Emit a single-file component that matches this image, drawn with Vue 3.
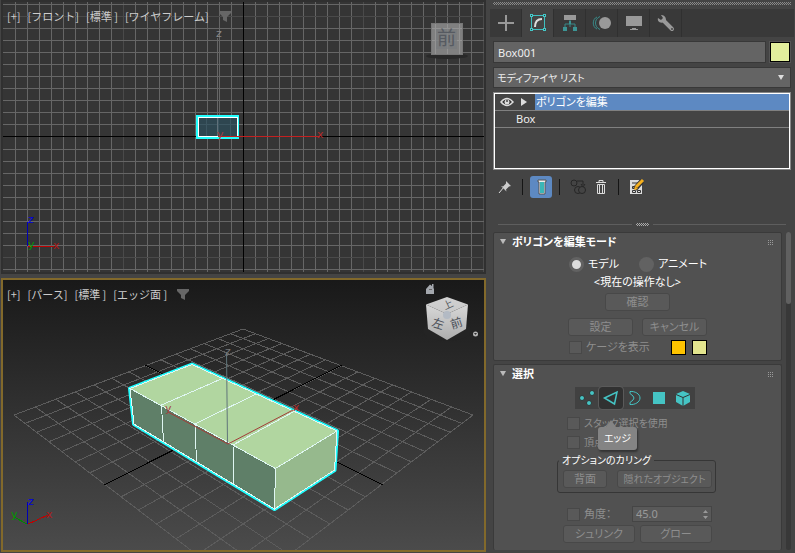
<template>
  <div class="app">
    <main class="viewports">
      <section class="viewport front">
        <svg class="scene" viewBox="3 2 481 270" preserveAspectRatio="xMidYMid slice">
          <g shape-rendering="crispEdges">
            <rect
              v-for="line in frontColumns"
              :key="'c' + line.pos"
              :x="line.pos"
              y="2"
              width="1"
              height="270"
              :fill="line.color"
            />
            <rect
              v-for="line in frontRows"
              :key="'r' + line.pos"
              x="3"
              :y="line.pos"
              width="481"
              height="1"
              :fill="line.color"
            />
            <rect x="3" y="136" width="481" height="1" fill="#000" />
            <rect x="243" y="2" width="1" height="270" fill="#000" />
            <rect x="217" y="38" width="1" height="98" fill="#666" />
            <rect x="196" y="115" width="43" height="24" fill="#2ff" />
            <rect x="198" y="117" width="40" height="20" fill="#fff" />
            <rect x="199" y="118" width="38" height="18" fill="#2e4650" />
            <path d="M206.500 118v18M218.500 118v18M230.500 118v18M199 124.500h38" stroke="#3c5661" />
            <rect x="217" y="118" width="1" height="18" fill="#60717a" />
            <rect x="218" y="136" width="102" height="1" fill="#c42020" />
            <rect x="27" y="222" width="1" height="24" fill="#0000b4" />
            <rect x="28" y="246" width="26" height="1" fill="#c00000" />
          </g>
          <text class="axis" x="216" y="37" fill="#888">z</text>
          <text class="axis" x="217" y="138" fill="#a33a40">y</text>
          <text class="axis" x="317" y="138" fill="#b52a2a">x</text>
          <text class="axis" x="28" y="223" fill="#0000e0">z</text>
          <text class="axis" x="28" y="248" fill="#090">y</text>
          <text class="axis" x="53" y="249" fill="#b01818">x</text>
          <ellipse cx="447" cy="56" rx="21" ry="3" fill="#292929" />
          <rect x="431.500" y="23.500" width="31" height="31" fill="#808080" stroke="#777" />
          <path d="M435.500 24v30M447.500 24v30M459.500 24v30M432 28.500h30M432 40.500h30" stroke="#939393" />
          <rect x="436" y="29" width="21" height="20" fill="#777a7d" opacity=".7" />
          <text class="cube-text" x="437" y="45" font-size="19" fill="#565a61">前</text>
        </svg>
        <nav class="labels">
          <button v-for="label in frontLabels" :key="label" type="button">{{ label }}</button>
          <svg class="funnel" viewBox="0 0 12 11"><path d="M0 0h12v2L8 6v5L4 9V6L0 2z" /></svg>
        </nav>
      </section>

      <section class="viewport persp">
        <svg class="scene" viewBox="3 280 481 270" preserveAspectRatio="xMidYMid slice">
          <defs>
            <linearGradient id="cubeTop" x1="0" y1="0" x2="0" y2="1">
              <stop offset="0" stop-color="#d2d2d2" />
              <stop offset="1" stop-color="#c8c8c8" />
            </linearGradient>
            <linearGradient id="cubeSide" x1="0" y1="0" x2="0" y2="1">
              <stop offset="0" stop-color="#d8d8d8" />
              <stop offset="1" stop-color="#adadad" />
            </linearGradient>
          </defs>
          <path :d="floorGrid" stroke="#5c5c5c" fill="none" shape-rendering="crispEdges" />
          <path d="M145 365L383 485M104 485L342 365" stroke="#000" shape-rendering="crispEdges" />
          <path
            d="M130 388.500L192 364.500L337 431L334.500 470L274.500 509L134 424Z"
            fill="#2ff"
            stroke="#2ff"
            stroke-width="4"
            stroke-linejoin="round"
          />
          <path d="M130 388.500L192 364.500L337 431L275.500 468.500Z" fill="#b1d6a0" />
          <path d="M130 388.500L275.500 468.500L274.500 509L134 424Z" fill="#5f7f68" />
          <path d="M275.500 468.500L337 431L334.500 470L274.500 509Z" fill="#96b98d" />
          <path
            d="M130 388.500L192 364.500L337 431L334.500 470L274.500 509L134 424ZL275.500 468.500L337 431M275.500 468.500L274.500 509M161.500 405L163.500 442M195 424L196.500 462M233 445L233.500 484M161.500 405L223.500 378M195 424L256 394M233 445L294 411.500"
            fill="none"
            stroke="#dff6f2"
            shape-rendering="crispEdges"
          />
          <path d="M226.500 352L227.500 444" stroke="#60757a" />
          <path d="M168 412L228 444L293 410" fill="none" stroke="#a33c38" />
          <text class="axis" x="225" y="355" fill="#777">z</text>
          <text class="axis" x="165" y="412" fill="#a14343">y</text>
          <text class="axis" x="293" y="411" fill="#b52a2a">x</text>
          <g fill="none" shape-rendering="crispEdges">
            <path d="M27.500 502v22" stroke="#0000b4" />
            <path d="M28 524L48 515" stroke="#c00000" />
            <path d="M27 524L14 517" stroke="#080" />
          </g>
          <text class="axis" x="28" y="505" fill="#0000e0">z</text>
          <text class="axis" x="11" y="518" fill="#090">y</text>
          <text class="axis" x="46" y="518" fill="#b01818">x</text>

          <ellipse cx="447" cy="331" rx="24" ry="10" fill="#242424" />
          <path d="M447 297L468 304.500L447 314L426 304.500Z" fill="url(#cubeTop)" />
          <path d="M426 304.500L447 314V340L428 329Z" fill="url(#cubeSide)" />
          <path d="M468 304.500L447 314V340L466 329Z" fill="url(#cubeSide)" />
          <text class="cube-text" font-size="10" fill="#555a60" transform="translate(445 310) rotate(-25)">上</text>
          <circle cx="447" cy="315" r="4" fill="#b3bac4" />
          <text class="cube-text" font-size="12" fill="#4b5058" transform="translate(431 326) rotate(18)">左</text>
          <text class="cube-text" font-size="12" fill="#4b5058" transform="translate(452 329) rotate(-18)">前</text>
          <path d="M426 289L430 284.500L432 286V284H433.500V288L434 289V294H426Z" fill="#a4a8ae" />
          <path d="M429 289h3v1h-3z" fill="#666" />
          <circle cx="475.500" cy="334" r="2.500" fill="#b5b5b5" />
          <path d="M474 333h3l-1.500 2z" fill="#333" />
        </svg>
        <nav class="labels">
          <button v-for="label in perspLabels" :key="label" type="button">{{ label }}</button>
          <svg class="funnel" viewBox="0 0 12 11"><path d="M0 0h12v2L8 6v5L4 9V6L0 2z" /></svg>
        </nav>
      </section>
    </main>

    <aside class="panel">
      <div class="grip"></div>
      <nav class="tabs">
        <button type="button" class="tab" aria-label="作成">
          <svg viewBox="0 0 24 24"><path d="M12 4v16M4 12h16" stroke="#999" stroke-width="2" /></svg>
        </button>
        <button type="button" class="tab active" aria-label="修正">
          <svg viewBox="0 0 24 24" shape-rendering="crispEdges">
            <path d="M6 4.500h12M6 18.500h12M5.500 6v12M18.500 6v12" stroke="#3fbfc0" fill="none" />
            <path d="M4.500 3.500h2v2h-2zM17.500 3.500h2v2h-2zM4.500 17.500h2v2h-2zM17.500 17.500h2v2h-2z" fill="#333" stroke="#45c8c8" />
            <path d="M9 16C9 11 11 8 16 8" stroke="#ddd" stroke-width="2" fill="none" shape-rendering="auto" />
          </svg>
        </button>
        <button type="button" class="tab" aria-label="階層">
          <svg viewBox="0 0 24 24">
            <path d="M6 4h12v5H6z" fill="#999" />
            <path d="M12 9v4M7 17v-4h10v4M12 13v3" stroke="#388a89" fill="none" />
            <path d="M5 16h4v4H5zM15 16h4v4h-4zM11 10h2v3h-2z" fill="#3c9595" />
          </svg>
        </button>
        <button type="button" class="tab" aria-label="モーション">
          <svg viewBox="0 0 24 24">
            <circle cx="15" cy="12" r="6" fill="#999" />
            <path d="M7 6C2 8 2 16 7 18M10 5.500C4 8 4 16 10 18.500" stroke="#388a89" fill="none" />
          </svg>
        </button>
        <button type="button" class="tab" aria-label="表示">
          <svg viewBox="0 0 24 24"><path d="M4 5h16v10H4zM10 17h4v1h2v1H8v-1h2z" fill="#999" /></svg>
        </button>
        <button type="button" class="tab" aria-label="ユーティリティ">
          <svg viewBox="0 0 24 24">
            <path d="M10 10L18 18" stroke="#999" stroke-width="4" stroke-linecap="round" />
            <path d="M7 4L9 7L7 9L4 7C3 10 6 13 10 11L12 9C12 5 9 4 7 4Z" fill="#999" />
            <circle cx="18" cy="18" r="1" fill="#444" />
          </svg>
        </button>
      </nav>

      <div class="name-row">
        <input v-model="objectName" class="name-input" type="text" aria-label="オブジェクト名" />
        <button type="button" class="color-swatch" aria-label="カラー"></button>
      </div>

      <div class="modifier-select">
        <select aria-label="モディファイヤ リスト">
          <option>モディファイヤ リスト</option>
        </select>
      </div>

      <ul class="stack">
        <li class="stack-row">
          <svg class="eye" viewBox="0 0 14 10">
            <path d="M1 5Q7-2 13 5Q7 12 1 5Z" fill="#333" stroke="#ddd" stroke-width="1.500" />
            <circle cx="7" cy="5" r="2.500" fill="#ddd" />
            <circle cx="7" cy="4" r="1" fill="#444" />
          </svg>
          <svg class="expand" viewBox="0 0 6 8"><path d="M0 0l6 4-6 4z" fill="#ddd" /></svg>
          <button type="button" class="stack-name selected">ポリゴンを編集</button>
        </li>
        <li class="stack-row">
          <button type="button" class="stack-name base">Box</button>
        </li>
      </ul>

      <div class="toolbar">
        <button type="button" class="tool" aria-label="スタックを固定">
          <svg viewBox="0 0 22 22">
            <path d="M6 17l5-6" stroke="#ddd" />
            <path d="M13 5l5 5-2 .500-3 3 .500 2L8 10l2 .500 3-3z" fill="#ccc" />
          </svg>
        </button>
        <span class="divider"></span>
        <button type="button" class="tool on" aria-label="最終結果を表示">
          <svg viewBox="0 0 22 22">
            <path d="M8 4h8v2h-1v12h-6V6H8z" fill="#eee" stroke="#555" />
            <path d="M10 6h4v11h-4z" fill="#3bb6b6" />
          </svg>
        </button>
        <span class="divider"></span>
        <button type="button" class="tool" aria-label="固有にする">
          <svg viewBox="0 0 22 22">
            <g fill="#444" stroke="#262626">
              <circle cx="7" cy="7" r="3" />
              <path d="M10 5h6v4M14 8l2 3 2-3" />
              <circle cx="11" cy="14" r="3.500" />
              <circle cx="15" cy="14" r="3.500" />
            </g>
          </svg>
        </button>
        <button type="button" class="tool" aria-label="削除">
          <svg viewBox="0 0 22 22">
            <path d="M7 6.500h10M10 6V4.500h4V6M8.500 8.500h7v9h-7zM10.500 9v8M13.500 9v8" stroke="#ddd" fill="none" />
          </svg>
        </button>
        <span class="divider"></span>
        <button type="button" class="tool" aria-label="セットを設定">
          <svg viewBox="0 0 22 22">
            <path d="M4 4h12v14H4z" fill="#ddd" />
            <path d="M6 7h8M6.500 10.500h3v2h-3zM6.500 14.500h3v2h-3zM11.500 14.500h3v2h-3z" stroke="#333" fill="none" />
            <path d="M9 13l7-8" stroke="#333" stroke-width="5" />
            <path d="M10 11l7-7" stroke="#f6b01e" stroke-width="3" />
            <path d="M8 14l1-4 3 3z" fill="#f6b01e" />
          </svg>
        </button>
      </div>

      <div class="splitter"><span></span></div>

      <div class="rollout-area">
        <div class="rollouts">
          <section class="rollout">
            <header class="rollout-head">
              <svg class="arrow" viewBox="0 0 7 6"><path d="M0 0h7L3.500 6z" /></svg>
              <h2>ポリゴンを編集モード</h2>
              <svg class="dots" viewBox="0 0 5 5"><path d="M0 .500h5M0 2.500h5M0 4.500h5" /></svg>
            </header>
            <div class="radios">
              <label><input v-model="mode" type="radio" value="model" />モデル</label>
              <label><input v-model="mode" type="radio" value="animate" />アニメート</label>
            </div>
            <p class="operation">&lt;現在の操作なし&gt;</p>
            <button type="button" class="btn confirm" disabled>確認</button>
            <div class="pair">
              <button type="button" class="btn" disabled>設定</button>
              <button type="button" class="btn" disabled>キャンセル</button>
            </div>
            <div class="cage">
              <label class="check"><input type="checkbox" disabled />ケージを表示</label>
              <button type="button" class="cage-color orange" aria-label="ケージ カラー"></button>
              <button type="button" class="cage-color yellow" aria-label="選択ケージ カラー"></button>
            </div>
          </section>

          <section class="rollout selection">
            <header class="rollout-head">
              <svg class="arrow" viewBox="0 0 7 6"><path d="M0 0h7L3.500 6z" /></svg>
              <h2>選択</h2>
              <svg class="dots" viewBox="0 0 5 5"><path d="M0 .500h5M0 2.500h5M0 4.500h5" /></svg>
            </header>
            <div class="levels">
              <button type="button" aria-label="頂点">
                <svg viewBox="0 0 24 22" fill="#45c4c4" stroke="#333">
                  <circle cx="7" cy="11" r="2.500" />
                  <circle cx="17" cy="6" r="2.500" />
                  <circle cx="14" cy="16" r="2.500" />
                </svg>
              </button>
              <button type="button" class="active" aria-label="エッジ">
                <svg viewBox="0 0 24 22"><path d="M5.500 11L18 5L15.500 17z" fill="none" stroke="#45c4c4" stroke-width="1.500" /></svg>
                <span class="tooltip">エッジ</span>
              </button>
              <button type="button" aria-label="境界">
                <svg viewBox="0 0 24 22">
                  <path d="M7 4.500C12 4 17 7 17 11S12 18 7 17.500V15.500L10 13L11 11L10 9L7 6.500Z" fill="none" stroke="#45c4c4" />
                </svg>
              </button>
              <button type="button" aria-label="ポリゴン">
                <svg viewBox="0 0 24 22"><path d="M6 5h12v12H6z" fill="#45c4c4" /></svg>
              </button>
              <button type="button" aria-label="要素">
                <svg viewBox="0 0 24 22">
                  <path d="M12 4l7 3v8l-7 4-7-4V7z" fill="#45c4c4" />
                  <path d="M5 7.500l7 3 7-3M12 10.500V19" fill="none" stroke="#333" />
                </svg>
              </button>
            </div>
            <label class="check option"><input type="checkbox" disabled />スタック選択を使用</label>
            <label class="check option"><input type="checkbox" disabled />頂点</label>
            <fieldset class="culling">
              <legend>オプションのカリング</legend>
              <button type="button" class="btn" disabled>背面</button>
              <button type="button" class="btn" disabled>隠れたオブジェクト</button>
            </fieldset>
            <div class="angle">
              <label class="check"><input type="checkbox" disabled />角度：</label>
              <div class="spinner">
                <input v-model="angle" type="text" aria-label="角度の値" disabled />
                <svg viewBox="0 0 5 9"><path d="M0 3h5L2.500 0zM0 6h5L2.500 9z" fill="#999" /></svg>
              </div>
            </div>
            <div class="pair shrink">
              <button type="button" class="btn" disabled>シュリンク</button>
              <button type="button" class="btn" disabled>グロー</button>
            </div>
          </section>
        </div>
        <div class="scrollbar"><span></span></div>
      </div>
    </aside>
  </div>
</template>

<script setup>
import { ref, computed } from 'vue'

const objectName = ref('Box001')
const mode = ref('model')
const angle = ref('45.0')

const frontLabels = ['[+]', '[フロント]', '[標準 ]', '[ワイヤフレーム]']
const perspLabels = ['[+]', '[パース]', '[標準 ]', '[エッジ面 ]']

const lineColor = (step) => (step % 10 === 0 ? '#4a4a4a' : '#666')

const frontColumns = computed(() => {
  const lines = []
  for (let i = -19; i <= 20; i++) {
    if (i !== 0) lines.push({ pos: 243 + i * 12, color: lineColor(i) })
  }
  return lines
})

const frontRows = computed(() => {
  const lines = []
  for (let i = -11; i <= 11; i++) {
    if (i === 0) continue
    lines.push({ pos: 136 + i * 12 + (i > 0 ? 1 : 0), color: lineColor(i) })
  }
  return lines
})

// Floor corners in screen space, w is the perspective weight
const corners = {
  back: { x: 243, y: 329, w: 1.341 },
  right: { x: 473, y: 415, w: 1 },
  near: { x: 243, y: 590, w: 0.659 },
  left: { x: 14, y: 415, w: 1 }
}

const project = (u, v) => {
  const parts = [
    [corners.back, (1 - u) * (1 - v)],
    [corners.right, u * (1 - v)],
    [corners.near, u * v],
    [corners.left, (1 - u) * v]
  ]
  let x = 0
  let y = 0
  let w = 0
  parts.forEach(([c, k]) => {
    x += c.x * c.w * k
    y += c.y * c.w * k
    w += c.w * k
  })
  return `${(x / w).toFixed(1)} ${(y / w).toFixed(1)}`
}

const floorGrid = computed(() => {
  let d = ''
  for (let i = 0; i <= 14; i++) {
    const t = i / 14
    d += `M${project(t, 0)}L${project(t, 1)}M${project(0, t)}L${project(1, t)}`
  }
  return d
})
</script>

<style>
body {
  margin: 0;
  background: #444;
}
</style>

<style scoped>
.app {
  display: grid;
  grid-template-columns: minmax(0, 1fr) 309px;
  min-height: 100vh;
  background: #444;
  color: #eee;
  font-family: "Noto Sans", "Noto Sans CJK JP", sans-serif;
  font-size: 11px;
  line-height: 16px;
}

.app * {
  box-sizing: border-box;
}

button,
input,
select {
  font: inherit;
  color: inherit;
  margin: 0;
  padding: 0;
  border: none;
  background: none;
}

.viewports {
  display: grid;
  grid-template-rows: 1fr 1fr;
  gap: 4px;
  padding: 0 0 1px 1px;
}

.viewport {
  position: relative;
  min-height: 0;
  border: 2px solid #333;
}

.front {
  background: #353535;
  border-color: #303030;
}

.persp {
  background: linear-gradient(#191919, #4b4b4b);
  border-color: #82692b;
}

.scene {
  display: block;
  width: 100%;
  height: 100%;
}

.axis {
  font-family: "DejaVu Sans", sans-serif;
  font-size: 11px;
}

.cube-text {
  font-family: "Noto Sans CJK JP", sans-serif;
}

.labels {
  position: absolute;
  top: 6px;
  left: 4px;
  display: flex;
  align-items: center;
  gap: 7px;
  color: #ccc;
  font-family: "Noto Sans CJK JP", sans-serif;
}

.labels button {
  white-space: pre;
}

.funnel {
  width: 12px;
  margin-left: 3px;
  fill: #666;
}

.panel {
  display: flex;
  flex-direction: column;
  padding: 2px 4px 3px 7px;
  font-feature-settings: "palt";
}

.grip {
  height: 3px;
  background: repeating-conic-gradient(#888 0 25%, #444 0 50%) 0 0 / 2px 2px;
}

.tabs {
  display: flex;
  height: 28px;
  margin: 4px -3px 4px -3px;
  background: #393939;
}

.tab {
  width: 32px;
  border-right: 1px solid #303030;
}

.tab.active {
  background: #444;
}

.tab svg {
  display: block;
  width: 24px;
  margin: auto;
}

.name-row {
  display: flex;
  gap: 4px;
}

.name-input {
  flex: 1;
  min-width: 0;
  height: 22px;
  padding: 0 4px;
  border: 1px solid #383838;
  background: #646464;
}

.color-swatch {
  width: 20px;
  height: 20px;
  margin: 1px 1px 1px 0;
  border: 1px solid #000;
  background: #e2ef9c;
  outline: 1px solid #555;
}

.modifier-select {
  position: relative;
  margin-top: 4px;
}

.modifier-select select {
  display: block;
  width: 100%;
  height: 21px;
  padding: 0 3px;
  border: 1px solid #383838;
  background: #646464;
  font-size: 10px;
  appearance: none;
}

.modifier-select::after {
  content: "";
  position: absolute;
  top: 8px;
  right: 7px;
  border: 3px solid transparent;
  border-top: 5px solid #ddd;
  border-bottom: 0;
}

.stack {
  height: 78px;
  margin: 4px 0 0;
  padding: 0;
  border: 2px solid #fff;
  outline: 1px solid #888;
  outline-offset: -1px;
  list-style: none;
}

.stack-row {
  display: flex;
  align-items: center;
  height: 17px;
  border-bottom: 1px solid #808080;
}

.eye {
  width: 14px;
  margin: 0 7px 0 5px;
}

.expand {
  width: 6px;
  margin-right: 8px;
}

.stack-name {
  height: 16px;
  text-align: left;
}

.stack-name.selected {
  flex: 1;
  padding-left: 1px;
  background: #5d89c2;
  color: #fff;
}

.base {
  padding-left: 21px;
}

.toolbar {
  display: flex;
  align-items: center;
  margin-top: 6px;
}

.tool {
  width: 22px;
  height: 22px;
  border-radius: 3px;
}

.tool svg {
  display: block;
  width: 22px;
}

.tool.on {
  background: #5d89c2;
}

.divider {
  width: 1px;
  height: 16px;
  margin: 0 7px;
  background: #151515;
}

.splitter {
  display: flex;
  align-items: center;
  gap: 4px;
  height: 6px;
  margin: 23px 5px 5px;
}

.splitter::before,
.splitter::after {
  content: "";
  flex: 1;
  height: 1px;
  background: #5e5e5e;
}

.splitter span {
  width: 13px;
  height: 3px;
  background: repeating-conic-gradient(#aaa 0 25%, #444 0 50%) 0 0 / 2px 2px;
}

.rollout-area {
  display: flex;
  flex: 1;
  gap: 4px;
}

.rollouts {
  display: flex;
  flex: 1;
  flex-direction: column;
  gap: 3px;
}

.rollout {
  padding: 0 8px 5px;
  border: 1px solid #3a3a3a;
  border-radius: 2px;
  background: #515151;
}

.selection {
  flex: 1;
  padding-bottom: 4px;
  border-bottom: none;
}

.rollout-head {
  display: flex;
  align-items: center;
  height: 18px;
}

.rollout-head h2 {
  flex: 1;
  margin: 0;
  color: #fff;
  font-size: 11px;
  font-weight: 700;
}

.arrow {
  width: 6px;
  margin: 0 6px 0 -2px;
  fill: #bbb;
}

.dots {
  width: 5px;
  height: 5px;
  stroke: #999;
  stroke-dasharray: 1;
  shape-rendering: crispEdges;
}

.radios {
  display: flex;
  gap: 20px;
  height: 20px;
  margin: 3px 0 0 67px;
}

.radios label {
  display: flex;
  align-items: center;
  gap: 4px;
  color: #fff;
}

.radios input {
  width: 15px;
  height: 15px;
  border-radius: 50%;
  background: #626262;
  appearance: none;
}

.radios input:checked {
  border: 3px solid #626262;
  background: #ddd;
}

.operation {
  margin: 0;
  color: #fff;
  text-align: center;
}

.btn {
  display: block;
  height: 18px;
  border: 1px solid #484848;
  border-radius: 3px;
  background: #595959;
  color: #8e8e8e;
  line-height: 14px;
}

.confirm {
  width: 65px;
  margin: 3px auto 0;
}

.pair {
  display: flex;
  justify-content: center;
  gap: 9px;
  margin-top: 7px;
}

.pair .btn {
  width: 65px;
}

.cage {
  display: flex;
  align-items: center;
  gap: 6px;
  margin: 3px 66px 0 67px;
}

.check {
  display: flex;
  align-items: center;
  gap: 4px;
  color: #8e8e8e;
}

.check input {
  width: 13px;
  height: 13px;
  border: 1px solid #484848;
  background: #595959;
  appearance: none;
}

.cage .check {
  flex: 1;
}

.cage-color {
  width: 15px;
  height: 15px;
  border: 1px solid #000;
}

.orange {
  background: #ffc400;
}

.yellow {
  background: #e3e58e;
}

.levels {
  display: flex;
  width: 120px;
  margin: 4px auto 6px 73px;
  background: #414141;
}

.levels button {
  position: relative;
  width: 24px;
  height: 22px;
}

.levels button.active {
  border-radius: 3px;
  background: #313131;
  outline: 1px solid #5a5a5a;
}

.levels svg {
  display: block;
  width: 24px;
}

.tooltip {
  position: absolute;
  z-index: 1;
  top: 40px;
  left: -1px;
  width: 39px;
  height: 23px;
  border-radius: 3px;
  background: #848484;
  box-shadow: 1px 2px 2px #333;
  color: #fff;
  font-size: 10px;
  line-height: 23px;
}

.tooltip::before {
  content: "";
  position: absolute;
  top: -7px;
  left: 8px;
  border: 5px solid transparent;
  border-top: 0;
  border-bottom: 7px solid #848484;
}

.option {
  height: 16px;
  margin: 0 0 3px 65px;
  font-size: 10px;
}

.culling {
  display: flex;
  gap: 10px;
  width: 159px;
  margin: 0 0 13px 55px;
  padding: 3px 3px 4px 5px;
  border: 1px solid #363636;
  border-radius: 3px;
}

.culling legend {
  margin-left: -4px;
  padding: 0 3px;
  color: #fff;
  font-size: 10px;
  line-height: 14px;
}

.culling .btn:first-of-type {
  width: 44px;
}

.culling .btn:last-of-type {
  flex: 1;
  font-size: 10px;
}

.angle {
  display: flex;
  align-items: center;
  margin: 0 61px 0 65px;
}

.angle .check {
  flex: 1;
}

.spinner {
  display: flex;
  align-items: center;
  width: 80px;
  height: 16px;
  padding: 0 3px;
  border: 1px solid #454545;
  background: #595959;
  color: #999;
}

.spinner input {
  flex: 1;
  min-width: 0;
  height: 14px;
}

.spinner svg {
  width: 5px;
}

.shrink {
  gap: 5px;
  margin: 3px 61px 0 61px;
}

.shrink .btn {
  flex: 1;
}

.scrollbar {
  width: 5px;
  border-radius: 3px;
  background: #383838;
}

.scrollbar span {
  display: block;
  height: 72px;
  border-radius: 3px;
  background: #606060;
}
</style>
